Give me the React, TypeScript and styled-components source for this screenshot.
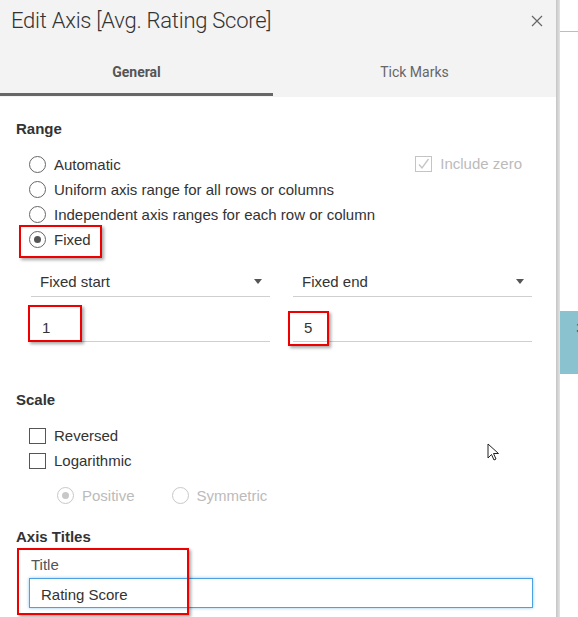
import React from "react";
import styled, { createGlobalStyle } from "styled-components";

const GlobalStyle = createGlobalStyle`
  html, body { margin: 0; padding: 0; background: #fff; }
  body { font-family: "Liberation Sans", Arial, sans-serif; color: #333; }
  * { box-sizing: border-box; }
`;

const Page = styled.div`
  display: flex;
  width: 578px;
  height: 617px;
  overflow: hidden;
  background: #fff;
`;

const Dialog = styled.div`
  position: relative;
  flex: none;
  width: 556px;
  display: flex;
  flex-direction: column;
  background: #fff;
`;

const Edge = styled.div`
  flex: none;
  width: 4px;
  background: linear-gradient(to right, #c4c4c4, #e4e4e4);
`;

const Backdrop = styled.div`
  flex: 1;
  display: flex;
  flex-direction: column;
  background: #fff;
  overflow: hidden;
`;

const BackdropLine = styled.div`
  margin-top: 31px;
  height: 1px;
  background: #bdbdbd;
`;

const BlueBlock = styled.div`
  margin-top: 279px;
  height: 63px;
  background: #8bc2cf;
  display: flex;
  justify-content: flex-end;
  padding-top: 9px;
  font-size: 14px;
  color: #3b5560;
  overflow: hidden;
`;

const CutGlyph = styled.span`
  margin-right: -6px;
`;

const Header = styled.div`
  background: #f3f3f3;
  padding-bottom: 1px;
`;

const TitleBar = styled.div`
  height: 44px;
  display: flex;
  align-items: center;
  justify-content: space-between;
  padding: 0 13px 3px 11px;
`;

const Title = styled.h1`
  margin: 0;
  font-family: Roboto, "Liberation Sans", sans-serif;
  font-weight: 300;
  font-size: 22px;
  letter-spacing: -0.25px;
  color: #333;
`;

const CloseButton = styled.button`
  border: 0;
  background: none;
  padding: 0;
  width: 12px;
  height: 12px;
  display: flex;
  cursor: pointer;
`;

const Tabs = styled.div`
  display: grid;
  grid-template-columns: 273px 1fr;
`;

const Tab = styled.div<{ $active?: boolean }>`
  height: 52px;
  padding-top: 20px;
  text-align: center;
  font-family: Roboto, "Liberation Sans", sans-serif;
  font-size: 14px;
  line-height: 16px;
  font-weight: ${(p) => (p.$active ? 700 : 400)};
  color: ${(p) => (p.$active ? "#555" : "#666")};
  border-bottom: 3px solid ${(p) => (p.$active ? "#666" : "transparent")};
`;

const Body = styled.div`
  padding: 0 24px 0 16px;
  display: flex;
  flex-direction: column;
`;

const SectionTitle = styled.div<{ $mt: number }>`
  margin-top: ${(p) => p.$mt}px;
  font-size: 15px;
  line-height: 18px;
  font-weight: 700;
  color: #333;
`;

const OptionList = styled.div<{ $mt: number }>`
  margin-top: ${(p) => p.$mt}px;
  display: flex;
  flex-direction: column;
`;

const OptionRow = styled.div<{ $indent?: number; $mt?: number }>`
  height: 25px;
  display: flex;
  align-items: center;
  padding-left: ${(p) => p.$indent ?? 13}px;
  margin-top: ${(p) => p.$mt ?? 0}px;
`;

const Option = styled.label<{ $disabled?: boolean; $mr?: number }>`
  position: relative;
  display: inline-flex;
  align-items: center;
  gap: 8px;
  font-size: 15px;
  line-height: 18px;
  color: ${(p) => (p.$disabled ? "#bbb" : "#333")};
  margin-right: ${(p) => p.$mr ?? 0}px;
`;

const RadioCircle = styled.span<{ $checked?: boolean; $disabled?: boolean }>`
  width: 17px;
  height: 17px;
  border-radius: 50%;
  border: 1px solid ${(p) => (p.$disabled ? "#c8c8c8" : "#666")};
  background: #fff;
  display: inline-flex;
  align-items: center;
  justify-content: center;
  &::after {
    content: "";
    display: ${(p) => (p.$checked ? "block" : "none")};
    width: 7px;
    height: 7px;
    border-radius: 50%;
    background: ${(p) => (p.$disabled ? "#c8c8c8" : "#555")};
  }
`;

const CheckBox = styled.span<{ $disabled?: boolean }>`
  width: 17px;
  height: 16px;
  border: 1px solid ${(p) => (p.$disabled ? "#c4c4c4" : "#555")};
  background: #fff;
  display: inline-flex;
  align-items: center;
  justify-content: center;
`;

const Aside = styled.div`
  margin-left: auto;
  margin-right: 10px;
`;

const Highlight = styled.span<{ $t: number; $l: number; $w: number; $h: number }>`
  position: absolute;
  top: ${(p) => p.$t}px;
  left: ${(p) => p.$l}px;
  width: ${(p) => p.$w}px;
  height: ${(p) => p.$h}px;
  border: 2px solid #ee0000;
  box-shadow: 2px 2px 3px rgba(0, 0, 0, 0.35);
  pointer-events: none;
`;

const Fields = styled.div`
  margin: 17px 0 0 15px;
  display: grid;
  grid-template-columns: 239px 239px;
  column-gap: 23px;
`;

const FieldColumn = styled.div`
  display: flex;
  flex-direction: column;
`;

const Dropdown = styled.div`
  height: 28px;
  display: flex;
  align-items: center;
  justify-content: space-between;
  padding: 0 8px 3px 9px;
  border-bottom: 1px solid #cfcfcf;
  font-size: 15px;
  color: #333;
`;

const Caret = styled.span`
  width: 0;
  height: 0;
  border-left: 4.5px solid transparent;
  border-right: 4.5px solid transparent;
  border-top: 5px solid #555;
`;

const ValueField = styled.div`
  position: relative;
  height: 45px;
  padding: 22px 0 0 11px;
  border-bottom: 1px solid #cfcfcf;
  font-size: 15px;
  line-height: 17px;
  color: #333;
`;

const TitleGroup = styled.div`
  position: relative;
  margin: 10px 0 0 13px;
  display: flex;
  flex-direction: column;
`;

const FieldLabel = styled.div`
  padding-left: 2px;
  font-size: 15px;
  line-height: 18px;
  color: #555;
`;

const TextInput = styled.div`
  margin-top: 4px;
  width: 504px;
  height: 30px;
  border: 1px solid #4aa3e0;
  box-shadow: 0 0 3px rgba(74, 163, 224, 0.6);
  padding: 2px 0 0 11px;
  display: flex;
  align-items: center;
  font-size: 15px;
  color: #333;
`;

const Cursor = styled.svg`
  position: absolute;
  left: 487px;
  top: 443px;
`;

export default function App() {
  return (
    <>
      <GlobalStyle />
      <Page>
        <Dialog>
          <Header>
            <TitleBar>
              <Title>Edit Axis [Avg. Rating Score]</Title>
              <CloseButton aria-label="Close">
                <svg width="12" height="12" viewBox="0 0 12 12">
                  <path d="M1 1 L11 11 M11 1 L1 11" stroke="#666" strokeWidth="1.2" fill="none" />
                </svg>
              </CloseButton>
            </TitleBar>
            <Tabs>
              <Tab $active>General</Tab>
              <Tab>Tick Marks</Tab>
            </Tabs>
          </Header>

          <Body>
            <SectionTitle $mt={23}>Range</SectionTitle>
            <OptionList $mt={14}>
              <OptionRow>
                <Option>
                  <RadioCircle />
                  Automatic
                </Option>
                <Aside>
                  <Option $disabled>
                    <CheckBox $disabled>
                      <svg width="13" height="12" viewBox="0 0 13 12">
                        <path d="M2 6.5 L5 10 L11.5 1" stroke="#c4c4c4" strokeWidth="1.3" fill="none" />
                      </svg>
                    </CheckBox>
                    Include zero
                  </Option>
                </Aside>
              </OptionRow>
              <OptionRow>
                <Option>
                  <RadioCircle />
                  Uniform axis range for all rows or columns
                </Option>
              </OptionRow>
              <OptionRow>
                <Option>
                  <RadioCircle />
                  Independent axis ranges for each row or column
                </Option>
              </OptionRow>
              <OptionRow>
                <Option>
                  <RadioCircle $checked />
                  Fixed
                  <Highlight $t={-6} $l={-10} $w={83} $h={33} />
                </Option>
              </OptionRow>
            </OptionList>

            <Fields>
              <FieldColumn>
                <Dropdown>
                  Fixed start
                  <Caret />
                </Dropdown>
                <ValueField>
                  1
                  <Highlight $t={8} $l={-3} $w={54} $h={37} />
                </ValueField>
              </FieldColumn>
              <FieldColumn>
                <Dropdown>
                  Fixed end
                  <Caret />
                </Dropdown>
                <ValueField>
                  5
                  <Highlight $t={14} $l={-5} $w={41} $h={35} />
                </ValueField>
              </FieldColumn>
            </Fields>

            <SectionTitle $mt={49}>Scale</SectionTitle>
            <OptionList $mt={14}>
              <OptionRow>
                <Option>
                  <CheckBox />
                  Reversed
                </Option>
              </OptionRow>
              <OptionRow>
                <Option>
                  <CheckBox />
                  Logarithmic
                </Option>
              </OptionRow>
              <OptionRow $indent={41} $mt={10}>
                <Option $disabled $mr={37}>
                  <RadioCircle $checked $disabled />
                  Positive
                </Option>
                <Option $disabled>
                  <RadioCircle $disabled />
                  Symmetric
                </Option>
              </OptionRow>
            </OptionList>

            <SectionTitle $mt={20}>Axis Titles</SectionTitle>
            <TitleGroup>
              <FieldLabel>Title</FieldLabel>
              <TextInput>Rating Score</TextInput>
              <Highlight $t={-8} $l={-12} $w={172} $h={67} />
            </TitleGroup>
          </Body>

          <Cursor width="14" height="20" viewBox="0 0 14 20">
            <path d="M1 1 L1 15 L4.5 11.5 L7 17 L9 16 L6.5 10.5 L11.5 10.5 Z" fill="#fff" stroke="#222" strokeWidth="1" />
          </Cursor>
        </Dialog>
        <Edge />
        <Backdrop>
          <BackdropLine />
          <BlueBlock>
            <CutGlyph>3</CutGlyph>
          </BlueBlock>
        </Backdrop>
      </Page>
    </>
  );
}
